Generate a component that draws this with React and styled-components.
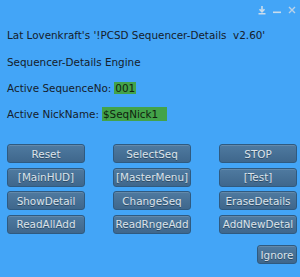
import React from "react";
import styled, { createGlobalStyle } from "styled-components";

const Global = createGlobalStyle`
  html, body { margin: 0; padding: 0; }
  body { background: #43a5f7; }
  #root { width: 300px; height: 277px; }
`;

const Panel = styled.div`
  width: 300px;
  height: 277px;
  box-sizing: border-box;
  background: #43a5f7;
  font-family: "DejaVu Sans", sans-serif;
  font-size: 10.4px;
  color: #15202b;
  display: flex;
  flex-direction: column;
`;

const TitleBar = styled.div`
  height: 20px;
  display: flex;
  justify-content: flex-end;
  align-items: center;
  gap: 5px;
  padding-right: 3px;
`;

const IconBox = styled.div`
  width: 10px;
  height: 10px;
  display: flex;
`;

const Body = styled.div`
  padding: 0 3px 0 7px;
  display: flex;
  flex-direction: column;
`;

const Line = styled.div`
  height: ${(p) => p.$h}px;
  display: flex;
  align-items: center;
  white-space: pre;
`;

const Field = styled.span`
  background: #43a349;
  color: #10220f;
  padding: 0 ${(p) => p.$pr || 1}px 0 1px;
  line-height: ${(p) => p.$lh}px;
  margin-left: 3px;
`;

const Grid = styled.div`
  display: grid;
  grid-template-columns: repeat(3, 78px);
  column-gap: 28px;
  row-gap: 4.5px;
  margin-top: 18px;
`;

const Btn = styled.div`
  height: 19px;
  box-sizing: border-box;
  border: 1px solid #2f5a80;
  border-radius: 3px;
  background: linear-gradient(#4f7aa0, #3f678c);
  box-shadow: inset 0 1px 0 rgba(255, 255, 255, 0.12);
  color: #dbe3ea;
  text-shadow: 0 1px 0 rgba(0, 0, 0, 0.35);
  display: flex;
  align-items: center;
  justify-content: center;
  font-size: 10.4px;
  white-space: nowrap;
`;

const Footer = styled.div`
  display: flex;
  justify-content: flex-end;
  margin-top: 11.5px;
`;

const SmallBtn = styled(Btn)`
  width: 40px;
`;

const labels = [
  "Reset", "SelectSeq", "STOP",
  "[MainHUD]", "[MasterMenu]", "[Test]",
  "ShowDetail", "ChangeSeq", "EraseDetails",
  "ReadAllAdd", "ReadRngeAdd", "AddNewDetal",
];

export default function App() {
  return (
    <>
      <Global />
      <Panel>
        <TitleBar>
          <IconBox>
            <svg width="10" height="10" viewBox="0 0 10 10">
              <path d="M5 1 V6.5 M2.5 4.2 L5 6.8 L7.5 4.2" stroke="#c9dcec" strokeWidth="1.6" fill="none" />
              <rect x="1.5" y="8" width="7" height="1.5" fill="#c9dcec" />
            </svg>
          </IconBox>
          <IconBox>
            <svg width="10" height="10" viewBox="0 0 10 10">
              <rect x="1" y="6.5" width="8" height="1.6" fill="#c9dcec" />
            </svg>
          </IconBox>
          <IconBox>
            <svg width="10" height="10" viewBox="0 0 10 10">
              <path d="M2 2 L8 8 M8 2 L2 8" stroke="#b9d2e8" strokeWidth="1.4" />
            </svg>
          </IconBox>
        </TitleBar>
        <Body>
          <Line $h={30}>Lat Lovenkraft's '!PCSD Sequencer-Details  v2.60'</Line>
          <Line $h={24}>Sequencer-Details Engine</Line>
          <Line $h={28}>
            Active SequenceNo:<Field $lh={12}>001</Field>
          </Line>
          <Line $h={24}>
            Active NickName:<Field $lh={14} $pr={9}>$SeqNick1</Field>
          </Line>
          <Grid>
            {labels.map((l) => (
              <Btn key={l}>{l}</Btn>
            ))}
          </Grid>
          <Footer>
            <SmallBtn>Ignore</SmallBtn>
          </Footer>
        </Body>
      </Panel>
    </>
  );
}
